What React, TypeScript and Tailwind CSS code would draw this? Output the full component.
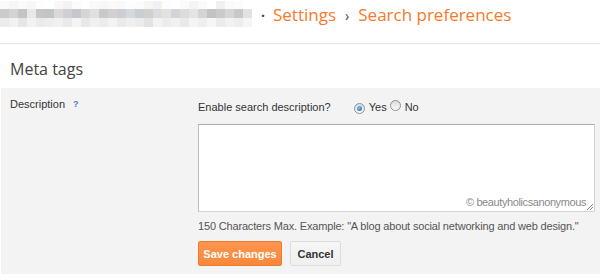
import React from "react";

const rowA = ["#fafafa","#f6f6f6","#fbfbfb","#f7f7f7","#fdfdfd","#ffffff","#f8f8f8","#f2f2f2","#fbfbfb","#fefefe","#f9f9f9","#f7f7f7","#fafafa","#f9f9f9","#fdfdfd","#fbfbfb","#f6f6f6","#f1f1f1","#fdfdfd","#ffffff","#fbfbfb","#f4f4f4","#fafafa","#ffffff","#f0f0f0","#fafafa","#fcfcfc","#ffffff"];
const rowB = ["#cbcbcb","#d3d3d3","#c4c4c4","#e6e8ea","#c6c6c6","#c2c5c8","#d9d9d9","#cdd1d4","#c6c8cc","#d6d6d6","#e0e0e0","#c9c9c9","#d1d1d1","#cbced2","#d6d9db","#c9ced1","#d2d0cc","#dadcde","#e4e2dc","#d2d4d6","#dcdcdc","#e4e4e4","#d4d4d4","#c2c2c2","#cacaca","#d6d6d6","#c8c8c8","#e2e2e2"];
const rowC = ["#ececec","#f2f2f2","#e6e6e6","#f2f2f2","#ebebeb","#eeeeee","#f1f1f1","#e9e9e9","#f4f4f4","#e8e8e8","#f0f0f0","#ececec","#f3f3f3","#eaeaea","#efefef","#ececec","#e2e2e2","#f3f3f3","#ececec","#f1f1f1","#e9e9e9","#f4f4f4","#eeeeee","#f6f6f6","#ebebeb","#f2f2f2","#eeeeee","#f5f5f5"];

function Mosaic() {
  const w = 9;
  return (
    <svg width="252" height="26" className="block">
      {rowA.map((c, i) => (
        <rect key={"a" + i} x={i * w} y={0} width={w} height={8} fill={c} />
      ))}
      {rowB.map((c, i) => (
        <rect key={"b" + i} x={i * w} y={8} width={w} height={9} fill={c} />
      ))}
      {rowC.map((c, i) => (
        <rect key={"c" + i} x={i * w} y={17} width={w} height={9} fill={c} />
      ))}
    </svg>
  );
}

function Radio({ checked }: { checked?: boolean }) {
  return (
    <span className="inline-flex items-center justify-center w-[11px] h-[11px] rounded-full border border-[#8e8f8f] bg-gradient-to-b from-[#dcdcdc] to-[#fbfbfb]">
      {checked && (
        <span className="w-[5px] h-[5px] rounded-full bg-[radial-gradient(circle_at_40%_35%,#7fc4f0,#1d5f9c)]" />
      )}
    </span>
  );
}

export default function App() {
  return (
    <div className="w-[600px] h-[280px] bg-white overflow-hidden font-['Liberation_Sans',Arial,sans-serif]">
      <header className="h-[44px] border-b border-[#e6e6e6] flex items-start">
        <div className="pt-[1px]">
          <Mosaic />
        </div>
        <div className="flex items-baseline pl-[9px] pt-[1px] font-['Open_Sans',sans-serif] text-[17px] leading-[28px] text-[#f47a2a]">
          <span className="text-[#444] text-[14px] mr-[8px] font-bold">·</span>
          <span>Settings</span>
          <span className="text-[#444] text-[14px] mx-[9px]">›</span>
          <span>Search preferences</span>
        </div>
      </header>
      <div className="h-[44px] pl-[10px] pt-[13px] font-['Open_Sans',sans-serif] text-[16px] leading-[24px] text-[#444]">
        Meta tags
      </div>
      <div className="ml-[1px] bg-[#f3f3f3] flex pt-[9px] pb-[8px] text-[11px] leading-[14px] text-[#333]">
        <div className="w-[197px] pl-[9px] flex items-start">
          <span>Description</span>
          <span className="ml-[8px] text-[9px] text-[#4a7fc0] font-bold">?</span>
        </div>
        <div className="flex flex-col">
          <div className="flex items-center pt-[3px] h-[17px]">
            <span>Enable search description?</span>
            <span className="ml-[23px]"><Radio checked /></span>
            <span className="ml-[4px]">Yes</span>
            <span className="ml-[3px]"><Radio /></span>
            <span className="ml-[4px]">No</span>
          </div>
          <div className="relative mt-[10px] w-[397px] h-[88px] bg-white border border-[#d3d3d3] border-t-[#aaa] border-l-[#bdbdbd]">
            <span className="absolute right-[8px] bottom-[2px] text-[11px] leading-[14px] text-[#8a8a8a] tracking-[-0.4px]">
              © beautyholicsanonymous
            </span>
            <svg className="absolute right-[1px] bottom-[1px]" width="7" height="7">
              <line x1="1" y1="7" x2="7" y2="1" stroke="#888" strokeWidth="1" />
              <line x1="4" y1="7" x2="7" y2="4" stroke="#888" strokeWidth="1" />
            </svg>
          </div>
          <div className="mt-[7px] text-[#555] tracking-[-0.17px]">
            150 Characters Max. Example: "A blog about social networking and web design."
          </div>
          <div className="flex gap-[8px] mt-[8px]">
            <button className="h-[25px] w-[84px] rounded-[2px] border border-[#f07a2c] bg-gradient-to-b from-[#fd9650] to-[#f8873a] text-white font-bold text-[11px]">
              Save changes
            </button>
            <button className="h-[25px] w-[51px] rounded-[2px] border border-[#dcdcdc] bg-gradient-to-b from-[#f6f6f6] to-[#f0f0f0] text-[#333] font-bold text-[11px]">
              Cancel
            </button>
          </div>
        </div>
      </div>
    </div>
  );
}
